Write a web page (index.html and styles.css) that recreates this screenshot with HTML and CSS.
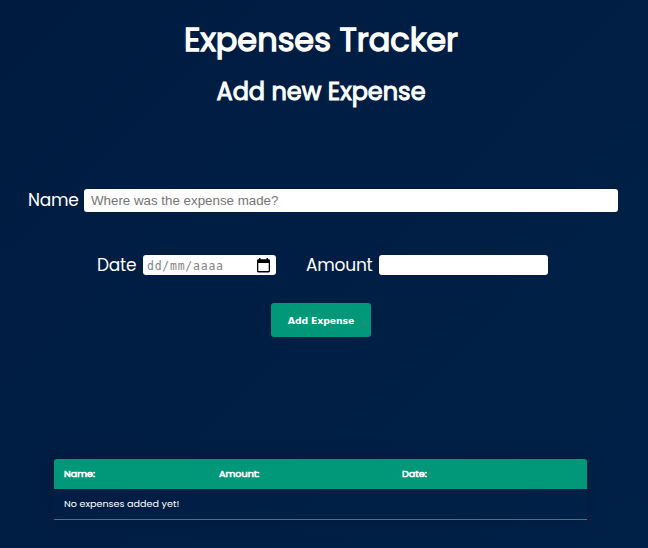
FILE: index.html
```html
<!DOCTYPE html>
<html lang="en">
<head>
<meta charset="utf-8">
<title>Expenses Tracker</title>
<link rel="stylesheet" href="styles.css">
</head>
<body>
<h1>Expenses Tracker</h1>
<h2>Add new Expense</h2>
<form class="expense-form">
  <div class="row name-row">
    <label for="name">Name</label>
    <input id="name" class="name-input" type="text" placeholder="Where was the expense made?">
  </div>
  <div class="row details-row">
    <label for="date" class="date-label">Date</label>
    <div class="date-input" id="date"><span>dd/mm/aaaa</span>
      <svg width="13" height="15" viewBox="0 0 13 15" aria-hidden="true"><path fill="#000" fill-rule="evenodd" d="M2 0h1.500v1.300h6V0H11v1.300h.6c.8 0 1.400.6 1.400 1.400v10.400c0 .8-.6 1.400-1.400 1.400H1.400C.6 14.500 0 13.900 0 13.100V2.700C0 1.900.6 1.300 1.400 1.300H2zM1.300 5v8.100h10.400V5z"/></svg>
    </div>
    <label for="amount" class="amount-label">Amount</label>
    <input id="amount" class="amount-input" type="text">
  </div>
  <button type="button">Add Expense</button>
</form>
<table>
  <thead><tr><th class="col-name">Name:</th><th class="col-amount">Amount:</th><th class="col-date">Date:</th></tr></thead>
  <tbody><tr><td colspan="3">No expenses added yet!</td></tr></tbody>
</table>
</body>
</html>
```
FILE: styles.css
```css
* { box-sizing: border-box; }
html { height: 100%; }
body {
  margin: 0;
  height: 548px;
  overflow: hidden;
  color: #fff;
  font-family: Poppins, Inter, sans-serif;
  background: linear-gradient(135deg, #001b40, #002147);
}
h1, h2 { margin: 0; text-align: center; font-weight: 400; white-space: nowrap; }
h1 { padding: 16px 6px 0 0; font-size: 32px; line-height: 48px; -webkit-text-stroke: 1.3px #fff; }
h2 { padding: 10px 6px 0 0; font-size: 24px; line-height: 36px; -webkit-text-stroke: 1px #fff; }
.expense-form { padding-top: 78px; }
.row { display: flex; align-items: center; }
.name-row { height: 24px; padding-left: 28px; }
.name-row label { width: 56px; }
.details-row { height: 24px; margin-top: 41px; padding-left: 97px; }
label { font-size: 17px; letter-spacing: -.2px; line-height: 24px; white-space: nowrap; }
.date-label { width: 46px; }
.amount-label { width: 73px; margin-left: 30px; }
input { border: 0; border-radius: 3px; background: #fff; padding: 0; }
.name-input {
  width: 534px;
  height: 23px;
  padding-left: 7px;
  font: 13.333px "Liberation Sans", sans-serif;
}
.name-input::placeholder { color: #757575; }
.amount-input { width: 169px; height: 20px; }
.date-input {
  display: flex;
  align-items: center;
  justify-content: space-between;
  width: 133px;
  height: 20px;
  padding: 0 6px 0 4px;
  border-radius: 3px;
  background: #fff;
  color: #858585;
  font: 11.5px "DejaVu Sans Mono", monospace;
  letter-spacing: .75px;
}
.date-input span { padding-top: 2px; }
button {
  display: block;
  width: 100px;
  height: 34px;
  margin: 26px 0 0 271px;
  padding: 0;
  border: 0;
  border-radius: 3px;
  background: #009879;
  color: #fff;
  font: bold 9.3px "DejaVu Sans", sans-serif;
  letter-spacing: -.1px;
}
table {
  width: 533px;
  margin: 122px 0 0 54px;
  border-collapse: collapse;
  table-layout: fixed;
  border-radius: 3px 3px 0 0;
  overflow: hidden;
  font-size: 9.6px;
  text-align: left;
  box-shadow: 0 0 20px rgba(0, 0, 0, .15);
}
thead tr { height: 30px; background: #009879; }
th, td { padding: 0 0 0 10px; }
th { font-weight: 400; -webkit-text-stroke: .6px #fff; }
.col-name { width: 155px; }
.col-amount { width: 183px; }
tbody tr { height: 30px; border-bottom: 1px solid #009879; }
```
